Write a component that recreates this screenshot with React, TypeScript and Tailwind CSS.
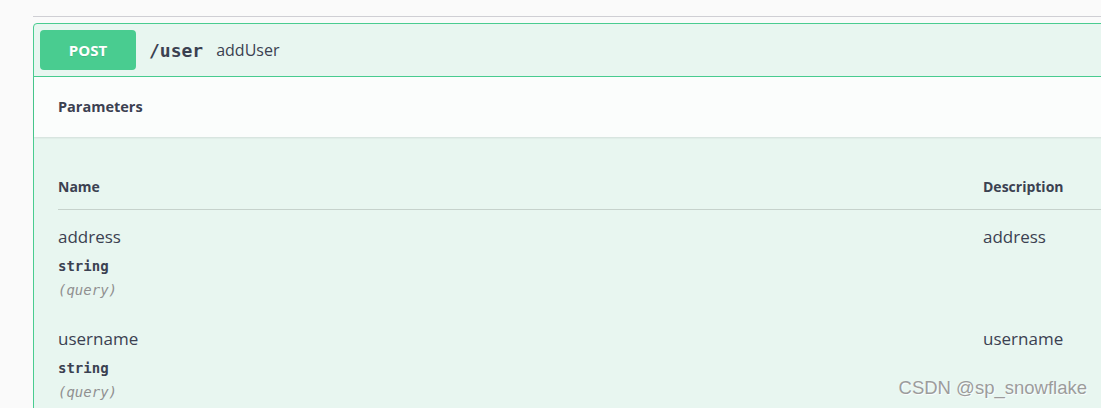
import React from "react";

function ParamRow({ name }: { name: string }) {
  return (
    <div className="flex pt-[17px] pb-[14px]">
      <div className="w-[925px] shrink-0">
        <div className="font-['Open_Sans',sans-serif] text-[17px] leading-[20px] text-[#3b4151]">{name}</div>
        <div className="mt-[11px] font-['DejaVu_Sans_Mono',monospace] text-[14px] leading-[16px] font-bold text-[#3b4151]">
          string
        </div>
        <div className="mt-[8px] font-['DejaVu_Sans_Mono',monospace] text-[14px] leading-[16px] italic text-[#909090]">
          (query)
        </div>
      </div>
      <div className="font-['Open_Sans',sans-serif] text-[17px] leading-[20px] text-[#3b4151]">{name}</div>
    </div>
  );
}

export default function App() {
  return (
    <div className="relative w-[1101px] h-[408px] overflow-hidden bg-[#fafafa]">
      <div className="pt-[16px] pl-[33px]">
        <div className="h-px bg-[#cfcfd4] w-[1200px]" />
        <div className="mt-[6px] w-[1200px] border border-[#49cc90] bg-[#e8f6f0] rounded-[4px]">
          <div className="flex items-center h-[53px] px-[6px] border-b border-[#49cc90]">
            <div className="w-[96px] h-[40px] rounded-[4px] bg-[#49cc90] flex items-center justify-center text-white font-bold text-[15px] font-['Open_Sans',sans-serif] [text-shadow:0_1px_0_rgba(0,0,0,0.1)]">
              POST
            </div>
            <div className="ml-[13px] font-['DejaVu_Sans_Mono',monospace] text-[18px] font-bold text-[#3b4151]">
              /user
            </div>
            <div className="ml-[13px] font-['Open_Sans',sans-serif] text-[16px] text-[#3b4151]">addUser</div>
          </div>
          <div className="h-[60px] flex items-center pl-[24px] bg-[#fbfdfc] shadow-[0_1px_2px_rgba(0,0,0,0.1)]">
            <div className="font-['Open_Sans',sans-serif] text-[14.5px] font-bold text-[#3b4151]">Parameters</div>
          </div>
          <div className="px-[24px] pt-[41px] pb-[40px]">
            <div className="flex border-b border-[#c6d2cc] pb-[13px] font-['Open_Sans',sans-serif] text-[14px] leading-[18px] font-bold text-[#3b4151]">
              <div className="w-[925px] shrink-0">Name</div>
              <div>Description</div>
            </div>
            <ParamRow name="address" />
            <ParamRow name="username" />
          </div>
        </div>
      </div>
      <div className="absolute right-[14px] top-[376px] font-['Liberation_Sans',Arial,sans-serif] text-[18.5px] leading-[24px] text-[#9c9c9c] [text-shadow:1px_1px_1px_rgba(255,255,255,0.9)]">
        CSDN @sp_snowflake
      </div>
    </div>
  );
}
